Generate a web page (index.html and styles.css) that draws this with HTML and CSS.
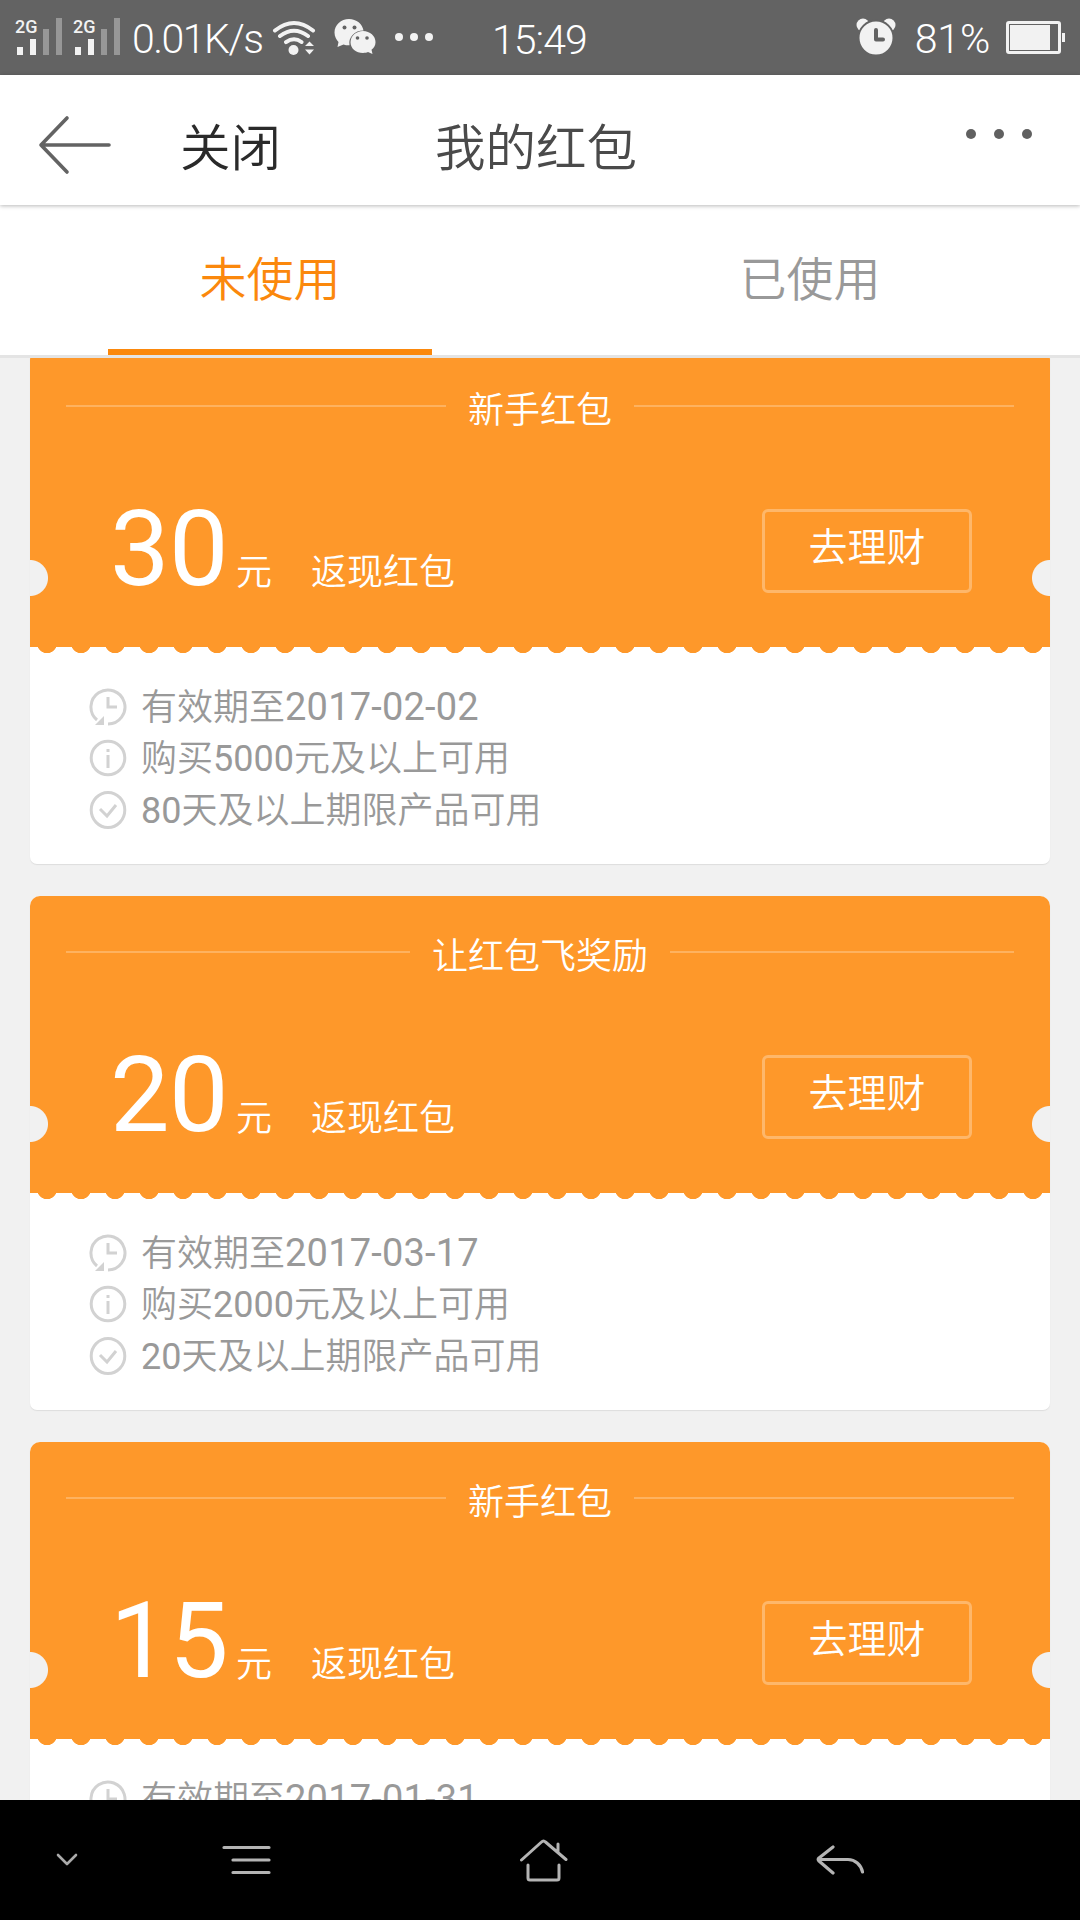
FILE: index.html
```
<!DOCTYPE html>
<html lang="zh-CN">
<head>
<meta charset="utf-8">
<title>我的红包</title>
<link rel="stylesheet" href="styles.css">
</head>
<body>
<svg class="defs" aria-hidden="true">
  <symbol id="i-time" viewBox="0 0 38 38"><path d="M19 36A17 17 0 1 0 8 32" fill="none" stroke="#d2d2d2" stroke-width="3"/><path d="M6 37h9V28z" fill="#d2d2d2"/><path d="M19 9v10h9" fill="none" stroke="#d2d2d2" stroke-width="3"/></symbol>
  <symbol id="i-info" viewBox="0 0 38 38"><circle cx="19" cy="19" r="16.8" fill="none" stroke="#d2d2d2" stroke-width="3"/><path d="M19 10v3M19 16v13" stroke="#d2d2d2" stroke-width="3"/></symbol>
  <symbol id="i-check" viewBox="0 0 38 38"><ellipse cx="19" cy="19" rx="16.8" ry="17.5" fill="none" stroke="#d2d2d2" stroke-width="3"/><path d="M11 18l7 7 9-11" fill="none" stroke="#d2d2d2" stroke-width="3"/></symbol>
  <symbol id="i-signal" viewBox="0 0 46 38"><path d="M1 29h6v8H1zM14 21h6v16h-6z" fill="#f2f2f2"/><path d="M27 11h6v26h-6zM40 0h6v37h-6z" fill="#979797"/></symbol>
</svg>

<div class="status">
  <div class="signal"><svg width="46" height="38"><use href="#i-signal"/></svg><span class="net">2G</span></div>
  <div class="signal"><svg width="46" height="38"><use href="#i-signal"/></svg><span class="net">2G</span></div>
  <span class="speed">0.01K/s</span>
  <svg class="wifi" width="44" height="38" viewBox="0 0 44 38"><g fill="none" stroke="#f2f2f2" stroke-width="4" stroke-linecap="round"><path d="M3 11.500Q22 -3.500 41 11.500M8 17Q22 6.500 36 17M14 23.200Q22 17.500 29.500 23"/></g><circle cx="21.500" cy="31" r="5" fill="#f2f2f2"/><path d="M33 27l4.500-4.500 4.500 4.500zM33 30.500h9L37.500 35.500z" fill="#f2f2f2"/></svg>
  <svg class="wechat" width="42" height="38" viewBox="0 0 42 38"><path d="M15 1C7 1 .5 7 .5 14.500c0 4 2 7.500 4 9.500L3.500 29l6-2.500c2 .7 4 .9 6 .8A14 12.500 0 0 1 29.500 12.500C28.500 6 22.500 1 15 1z" fill="#f2f2f2"/><path d="M29 13C22 13 16.500 18 16.500 24.200S22 35 29 35c2 0 3.500-.3 5-.9L38.500 36l-1-4.200c2.500-2 4-4.600 4-7.600C41.500 18 36 13 29 13z" fill="#f2f2f2"/><g fill="#636363"><circle cx="10.500" cy="9.500" r="2"/><circle cx="20.500" cy="9.500" r="2"/><circle cx="23.500" cy="20" r="1.800"/><circle cx="33" cy="20" r="1.800"/></g></svg>
  <svg class="more-sm" width="38" height="8" viewBox="0 0 38 8"><g fill="#f2f2f2"><circle cx="4" cy="4" r="4"/><circle cx="19" cy="4" r="4"/><circle cx="34" cy="4" r="4"/></g></svg>
  <span class="clock">15:49</span>
  <svg class="alarm" width="40" height="38" viewBox="0 0 40 38"><g fill="#f2f2f2"><circle cx="7" cy="7" r="6.500"/><circle cx="33" cy="7" r="6.500"/><circle cx="20" cy="20" r="17.500" stroke="#636363" stroke-width="2"/></g><path d="M20 12v9.500h7" fill="none" stroke="#636363" stroke-width="4" stroke-linecap="round" stroke-linejoin="round"/></svg>
  <span class="percent">81%</span>
  <svg class="battery" width="60" height="34" viewBox="0 0 60 34"><rect x="1.500" y="1.500" width="52" height="30" rx="1.500" fill="none" stroke="#f2f2f2" stroke-width="3"/><path d="M4 4h40v25H4zM56 12h3v9h-3z" fill="#f2f2f2"/></svg>
</div>

<header class="bar">
  <svg class="back" width="74" height="60" viewBox="0 0 74 60"><path d="M30 3L4 30l26 27M4 30h68" fill="none" stroke="#636363" stroke-width="3.600" stroke-linecap="round" stroke-linejoin="round"/></svg>
  <span class="close">关闭</span>
  <h1 class="title">我的红包</h1>
  <svg class="more" width="66" height="10" viewBox="0 0 66 10"><g fill="#606060"><circle cx="5" cy="5" r="5"/><circle cx="33" cy="5" r="5"/><circle cx="61" cy="5" r="5"/></g></svg>
</header>

<nav class="tabs">
  <a class="tab active">未使用</a>
  <a class="tab">已使用</a>
</nav>

<main class="list">
  <section class="coupon">
    <div class="top">
      <div class="name"><span>新手红包</span></div>
      <div class="row"><span class="num">30</span><span class="unit">元</span><span class="kind">返现红包</span><a class="go">去理财</a></div>
    </div>
    <ul class="rules">
      <li><svg width="38" height="38"><use href="#i-time"/></svg><span>有效期至<span class="date">2017-02-02</span></span></li>
      <li><svg width="38" height="38"><use href="#i-info"/></svg><span>购买<span class="qty">5000</span>元及以上可用</span></li>
      <li><svg width="38" height="38"><use href="#i-check"/></svg><span><span class="qty">80</span>天及以上期限产品可用</span></li>
    </ul>
  </section>
  <section class="coupon">
    <div class="top">
      <div class="name"><span>让红包飞奖励</span></div>
      <div class="row"><span class="num">20</span><span class="unit">元</span><span class="kind">返现红包</span><a class="go">去理财</a></div>
    </div>
    <ul class="rules">
      <li><svg width="38" height="38"><use href="#i-time"/></svg><span>有效期至<span class="date">2017-03-17</span></span></li>
      <li><svg width="38" height="38"><use href="#i-info"/></svg><span>购买<span class="qty">2000</span>元及以上可用</span></li>
      <li><svg width="38" height="38"><use href="#i-check"/></svg><span><span class="qty">20</span>天及以上期限产品可用</span></li>
    </ul>
  </section>
  <section class="coupon">
    <div class="top">
      <div class="name"><span>新手红包</span></div>
      <div class="row"><span class="num">15</span><span class="unit">元</span><span class="kind">返现红包</span><a class="go">去理财</a></div>
    </div>
    <ul class="rules">
      <li><svg width="38" height="38"><use href="#i-time"/></svg><span>有效期至<span class="date">2017-01-31</span></span></li>
    </ul>
  </section>
</main>

<footer class="keys">
  <svg class="k-down" width="22" height="14" viewBox="0 0 22 14"><path d="M2 2l9 9 9-9" fill="none" stroke="#aaa" stroke-width="2.600" stroke-linecap="round" stroke-linejoin="round"/></svg>
  <svg class="k-menu" width="50" height="30" viewBox="0 0 50 30"><path d="M2 2.500h45M11 15h36M11 27.500h36" stroke="#b4b4b4" stroke-width="3.200" stroke-linecap="round"/></svg>
  <svg class="k-home" width="50" height="44" viewBox="0 0 50 44"><path d="M2.500 22L22.500 4q2-2 4 0L47 21.500M39 6v8M9 27v13q0 2 2 2h27q2 0 2-2V27" fill="none" stroke="#b4b4b4" stroke-width="3" stroke-linecap="round" stroke-linejoin="round"/></svg>
  <svg class="k-back" width="48" height="32" viewBox="0 0 48 32"><path d="M17 3L3 14q-1.500 1.500 0 3l14 12M3 15.500h29c7 0 13 5 14.500 12.500" fill="none" stroke="#b4b4b4" stroke-width="3.200" stroke-linecap="round" stroke-linejoin="round"/></svg>
</footer>
</body>
</html>
```
FILE: styles.css
```
* { box-sizing: border-box; margin: 0; padding: 0; }
body {
  width: 1080px; height: 1920px; overflow: hidden;
  display: flex; flex-direction: column;
  background: #f1f1f1;
  font-family: Roboto, "Noto Sans CJK SC", sans-serif;
  font-weight: 350;
}
svg { display: block; flex: none; }
span, a { white-space: nowrap; }
.defs { position: absolute; width: 0; height: 0; }

/* status bar */
.status {
  flex: none; height: 75px; display: flex; align-items: flex-start;
  padding: 18px 14px 0 16px; background: #636363; color: #fff;
  font-size: 41px; line-height: 42px;
}
.signal { position: relative; margin-right: 12px; width: 46px; }
.net {
  position: absolute; left: -1px; top: 0;
  font: 500 18px/18px Roboto, sans-serif; color: #f2f2f2;
}
.speed { width: 141px; letter-spacing: -1.5px; }
.wifi { margin-top: 1px; margin-right: 18px; }
.wechat { margin-right: 19px; }
.more-sm { margin-top: 15px; width: 38px; }
.clock { margin: 1px 0 0 59px; width: 366px; letter-spacing: -1px; }
.alarm { width: 40px; }
.percent { margin-left: 19px; width: 92px; }
.battery { margin-top: 3px; }

/* title bar */
.bar {
  flex: none; height: 130px; display: flex; align-items: center;
  position: relative; z-index: 2; padding: 9px 48px 0 37px;
  background: #fff; box-shadow: 0 1px 4px rgba(0, 0, 0, .28);
}
.close { margin: -2px 0 0 69px; width: 255px; font-size: 50.5px; color: #2a2a2a; }
.title { margin-top: -2px; font-size: 50.5px; font-weight: 350; color: #4a4a4a; flex: 1; }
.more { margin-top: -22px; }

/* tabs */
.tabs {
  flex: none; height: 153px; display: flex; justify-content: space-around;
  position: relative; z-index: 1; background: #fff; border-bottom: 3px solid #e4e4e4;
}
.tab {
  width: 324px; padding-top: 4px; text-align: center; font-size: 47px; line-height: 142px;
  border-bottom: 6px solid transparent; color: #999; height: 150px;
}
.active { color: #fb880c; border-color: #fb880c; }

/* coupons */
.list { flex: 1; min-height: 0; overflow: hidden; padding: 0 30px; }
.coupon {
  height: 514px; margin-bottom: 32px; overflow: hidden; background: #fff;
  border-radius: 10px 10px 7px 7px; box-shadow: 0 1px 1px #ddd;
}
.coupon:first-child { margin-top: -8px; }
.top { position: relative; height: 297px; background: #fe982a; color: #fff; }
.top::before {
  content: ""; position: absolute; left: 0; right: 0; top: 210px; height: 36px;
  background:
    radial-gradient(circle at 0 50%, #f1f1f1 17.500px, transparent 18.500px) left / 20px 36px no-repeat,
    radial-gradient(circle at 100% 50%, #f1f1f1 17.500px, transparent 18.500px) right / 20px 36px no-repeat;
}
.top::after {
  content: ""; position: absolute; left: 0; right: 0; top: 100%; height: 7px;
  background: radial-gradient(circle at 17px -3.700px, #fe982a 9.500px, transparent 10.200px) 0 0 / 34px 7px repeat-x;
}
.name { display: flex; align-items: center; gap: 22px; padding: 33px 36px 0; height: 88px; font-size: 36px; line-height: 54px; }
.name::before, .name::after { content: ""; flex: 1; height: 2px; margin-bottom: 10px; background: rgba(255, 255, 255, .25); }
.row { display: flex; align-items: baseline; padding-left: 80px; height: 160px; line-height: 128px; margin-top: 47px; }
.num { font-size: 106px; width: 126px; letter-spacing: -.5px; font-weight: 400; }
.unit { font-size: 36px; width: 75px; }
.kind { font-size: 36px; }
.go {
  margin-left: auto; margin-right: 78px; align-self: flex-start; margin-top: 24px;
  width: 210px; height: 84px; border: 3px solid rgba(255, 255, 255, .3); border-radius: 6px;
  font-size: 39px; line-height: 73px; text-align: center;
}
.rules { list-style: none; padding: 34px 0 0 59px; font-size: 36px; color: #999; }
.rules li { display: flex; align-items: center; gap: 14px; height: 51.500px; }
.rules li > span { margin-top: -6px; }
.date { font-size: 38px; font-weight: 400; letter-spacing: .2px; }
.qty { font-weight: 400; }

/* system keys */
.keys { flex: none; height: 120px; background: #000; display: flex; align-items: center; }
.k-down { margin-left: 56px; }
.k-menu { margin-left: 144px; }
.k-home { margin-left: 247px; }
.k-back { margin-left: 247px; }
```
